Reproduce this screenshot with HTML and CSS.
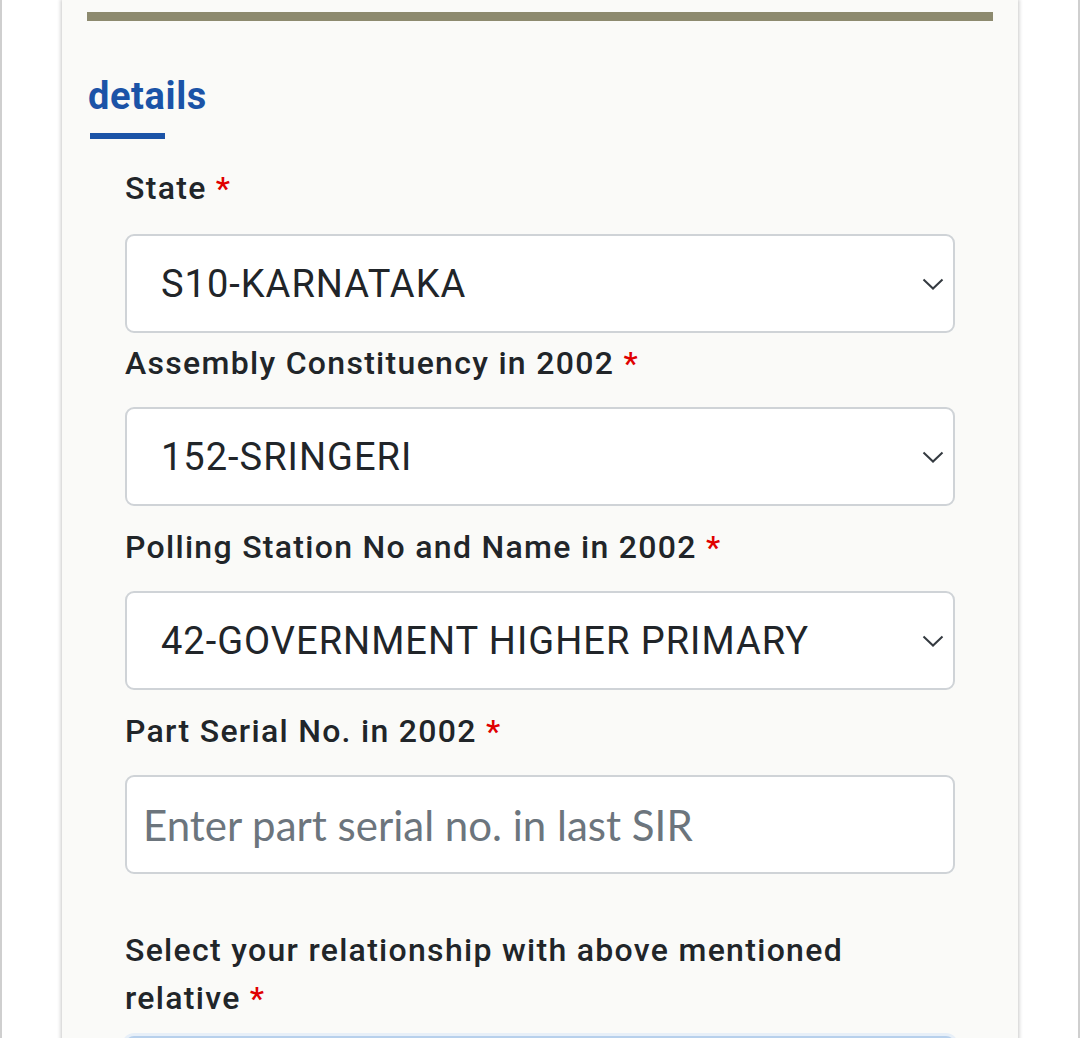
FILE: index.html
```html
<!DOCTYPE html>
<html>
<head>
<meta charset="utf-8">
<link rel="stylesheet" href="styles.css">
</head>
<body>
<div class="frame">
  <div class="card">
    <div class="topbar"></div>
    <h2 class="title">details</h2>
    <div class="underline"></div>
    <form class="form">
      <div class="group first">
        <div class="label">State <span class="req">*</span></div>
        <div class="select"><span>S10-KARNATAKA</span><svg class="chev" width="22" height="12" viewBox="0 0 22 12"><path d="M1.5 1.5 L11 10.5 L20.5 1.5" fill="none" stroke="#343a40" stroke-width="2"/></svg></div>
      </div>
      <div class="group second">
        <div class="label">Assembly Constituency in 2002 <span class="req">*</span></div>
        <div class="select"><span>152-SRINGERI</span><svg class="chev" width="22" height="12" viewBox="0 0 22 12"><path d="M1.5 1.5 L11 10.5 L20.5 1.5" fill="none" stroke="#343a40" stroke-width="2"/></svg></div>
      </div>
      <div class="group">
        <div class="label">Polling Station No and Name in 2002 <span class="req">*</span></div>
        <div class="select"><span>42-GOVERNMENT HIGHER PRIMARY</span><svg class="chev" width="22" height="12" viewBox="0 0 22 12"><path d="M1.5 1.5 L11 10.5 L20.5 1.5" fill="none" stroke="#343a40" stroke-width="2"/></svg></div>
      </div>
      <div class="group">
        <div class="label">Part Serial No. in 2002 <span class="req">*</span></div>
        <input class="input" type="text" placeholder="Enter part serial no. in last SIR">
      </div>
      <div class="group last">
        <div class="label">Select your relationship with above mentioned relative <span class="req">*</span></div>
        <div class="select focus"></div>
      </div>
    </form>
  </div>
</div>
</body>
</html>
```
FILE: styles.css
```css
html, body {
  margin: 0;
  padding: 0;
  background: #ffffff;
  height: 100%;
  overflow: hidden;
}
.frame {
  box-sizing: border-box;
  width: 1080px;
  height: 1038px;
  border-left: 2px solid #cfcfcf;
  border-right: 2px solid #cfcfcf;
  padding-left: 60px;
}
.card {
  width: 956px;
  box-sizing: border-box;
  height: 1200px;
  background: #fafaf8;
  box-shadow: 0 0 4px 1px rgba(0,0,0,0.22);
  padding: 12px 25px 0 25px;
  font-family: Roboto, "Liberation Sans", sans-serif;
}
.topbar {
  height: 9px;
  background: #8d8a6f;
}
.title {
  margin: 0;
  padding-top: 51px;
  font-size: 38px;
  line-height: 48px;
  font-weight: 700;
  letter-spacing: 0.6px;
  color: #1b53a7;
  padding-left: 1px;
}
.underline {
  width: 75px;
  height: 6px;
  background: #1b53a7;
  margin: 13px 0 0 3px;
}
.form {
  padding: 0 38px;
}
.group {
  margin-top: 17px;
}
.group.first { margin-top: 25px; }
.group.second { margin-top: 6px; }
.group.last { margin-top: 52px; }
.label {
  font-size: 32px;
  line-height: 48px;
  font-weight: 500;
  letter-spacing: 1.3px;
  color: #212529;
  margin-bottom: 20px;
}
.group.first .label { margin-bottom: 22px; }
.group.last .label { margin-bottom: 14px; }
.req {
  color: #e00000;
}
.select {
  box-sizing: border-box;
  height: 99px;
  border: 2px solid #cfd3d7;
  border-radius: 9px;
  background: #ffffff;
  display: flex;
  align-items: center;
  justify-content: space-between;
  padding: 0 9px 0 34px;
  font-size: 38px;
  letter-spacing: 1px;
  color: #212529;
}
.select.focus {
  border-color: #b7d0ec;
  box-shadow: 0 0 0 3px rgba(13,110,253,0.08);
}
.chev {
  display: block;
}
.input {
  display: block;
  box-sizing: border-box;
  width: 100%;
  height: 99px;
  border: 2px solid #cfd3d7;
  border-radius: 9px;
  background: #ffffff;
  padding: 0 16px;
  font-family: Lato, "Open Sans", sans-serif;
  font-size: 42px;
  color: #212529;
  outline: none;
}
.input::placeholder {
  color: #6c757d;
}
```
